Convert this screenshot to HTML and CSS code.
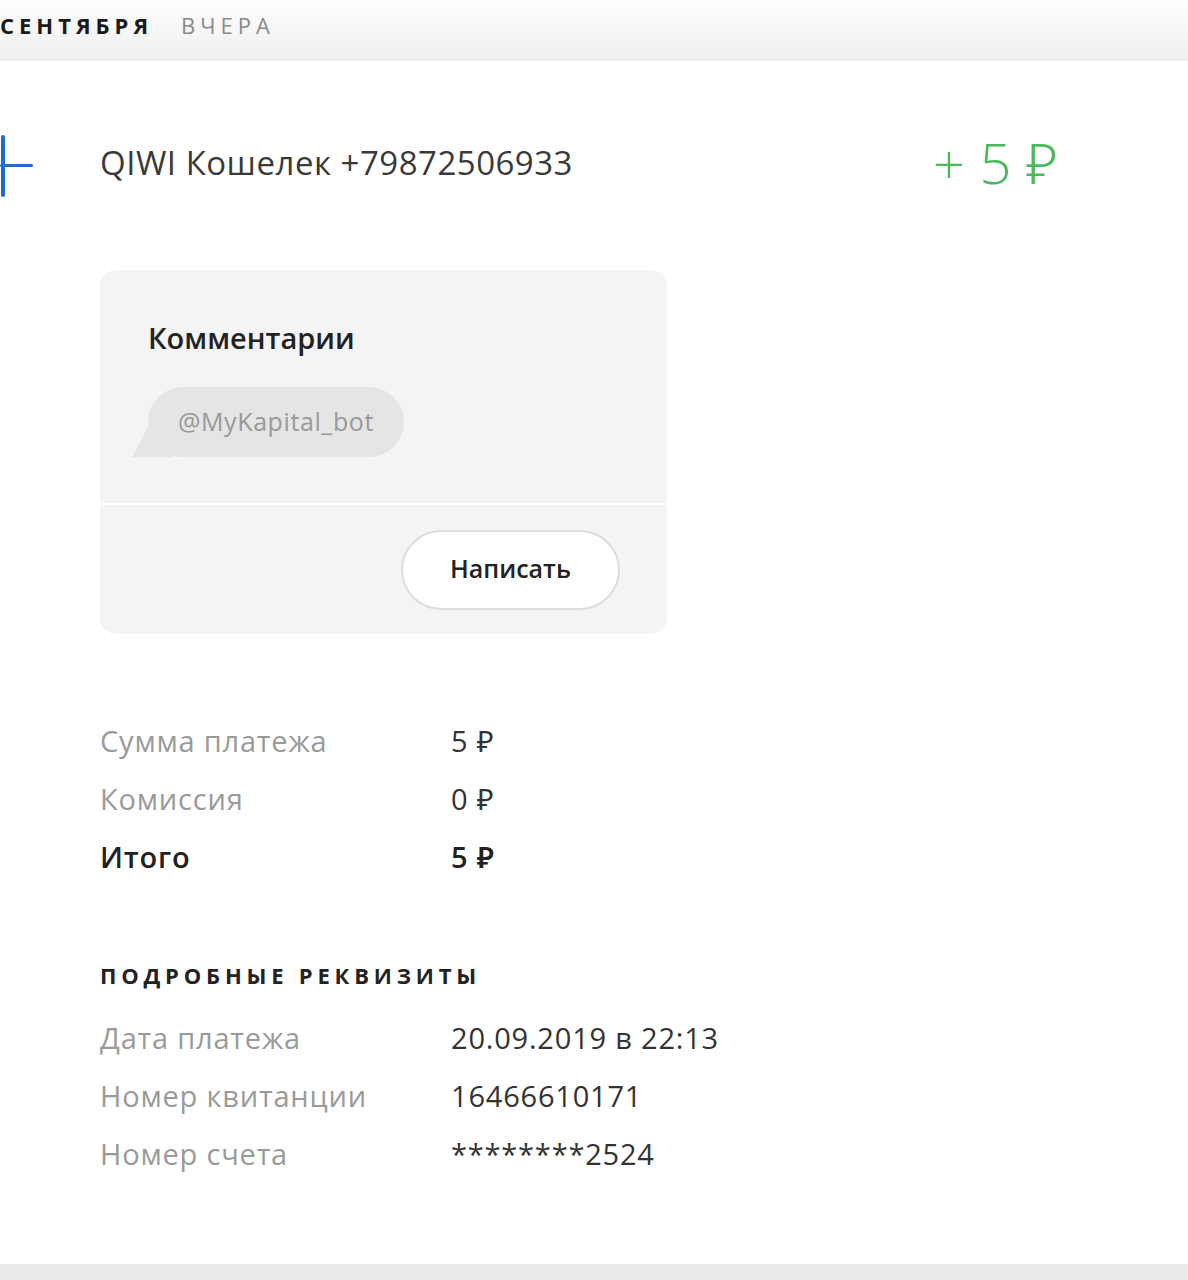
FILE: index.html
```html
<!DOCTYPE html>
<html lang="ru">
<head>
    <meta charset="UTF-8">
    <title>Платеж</title>
    <link rel="stylesheet" href="styles.css">
</head>
<body>
    <div class="day-bar">
        <span class="day-date">СЕНТЯБРЯ</span>
        <span class="day-label">ВЧЕРА</span>
    </div>

    <div class="payment">
        <div class="payment-head">
            <svg class="payment-icon" width="34" height="62" viewBox="0 0 34 62">
                <rect x="1" y="0" width="4" height="62" rx="2" fill="#1d6bd3"/>
                <rect x="0" y="29" width="33" height="3" rx="1.5" fill="#1d6bd3"/>
            </svg>
            <div class="payment-title">QIWI Кошелек +79872506933</div>
            <div class="payment-sum">+ 5 ₽</div>
        </div>

        <div class="comments">
            <div class="comments-body">
                <div class="comments-title">Комментарии</div>
                <div class="bubble">@MyKapital_bot</div>
            </div>
            <div class="comments-foot">
                <button class="write-btn">Написать</button>
            </div>
        </div>

        <div class="rows summary">
            <div class="row"><span class="row-label">Сумма платежа</span><span class="row-value">5 ₽</span></div>
            <div class="row"><span class="row-label">Комиссия</span><span class="row-value">0 ₽</span></div>
            <div class="row total"><span class="row-label">Итого</span><span class="row-value">5 ₽</span></div>
        </div>

        <h2 class="section-title">ПОДРОБНЫЕ РЕКВИЗИТЫ</h2>
        <div class="rows">
            <div class="row"><span class="row-label">Дата платежа</span><span class="row-value">20.09.2019 в 22:13</span></div>
            <div class="row"><span class="row-label">Номер квитанции</span><span class="row-value">16466610171</span></div>
            <div class="row"><span class="row-label">Номер счета</span><span class="row-value">********2524</span></div>
        </div>
    </div>

    <div class="page-foot"></div>
</body>
</html>
```

FILE: styles.css
```css
body {
    margin: 0;
    font-family: "Open Sans", "Noto Sans", sans-serif;
    color: #333;
    background: #fff;
}
.day-bar {
    height: 61px;
    display: flex;
    align-items: center;
    gap: 28px;
    padding-bottom: 12px;
    box-sizing: border-box;
    background: linear-gradient(#fefefe, #eeeeee);
    font-size: 22px;
    letter-spacing: 5px;
}
.day-date {
    font-weight: 700;
    color: #1a1a1a;
}
.day-label {
    color: #8a8a8a;
}
.payment {
    height: 1203px;
}
.payment-head {
    display: flex;
    align-items: center;
    padding: 70px 130px 0 0;
    height: 62px;
}
.payment-icon {
    flex: none;
    margin: 8px 66px 0 0;
}
.payment-title {
    flex: 1;
    font-size: 33px;
    letter-spacing: 0.5px;
    color: #3a3a3a;
}
.payment-sum {
    font-size: 56px;
    font-weight: 300;
    color: #4bb85c;
}
.comments {
    margin: 77px 0 0 100px;
    width: 567px;
    background: #f4f4f4;
    border-radius: 16px;
    overflow: hidden;
}
.comments-body {
    padding: 48px 48px 46px;
    border-bottom: 2px solid #fff;
}
.comments-title {
    font-size: 29px;
    font-weight: 600;
    color: #222;
}
.bubble {
    position: relative;
    display: inline-block;
    margin-top: 30px;
    padding: 0 30px;
    height: 70px;
    line-height: 68px;
    border-radius: 35px;
    background: #e5e5e5;
    font-size: 25px;
    letter-spacing: 0.6px;
    color: #999;
}
.bubble::before {
    content: "";
    position: absolute;
    left: -16px;
    bottom: 0;
    width: 40px;
    height: 30px;
    background: #e5e5e5;
    clip-path: polygon(0 100%, 40% 0, 100% 0, 100% 100%);
}
.comments-foot {
    display: flex;
    justify-content: flex-end;
    padding: 25px 47px 24px;
}
.write-btn {
    width: 219px;
    height: 80px;
    padding-bottom: 6px;
    border-radius: 40px;
    border: 2px solid #dcdcdc;
    background: #fff;
    font-family: inherit;
    font-size: 25px;
    font-weight: 600;
    color: #222;
}
.rows {
    padding-left: 100px;
}
.summary {
    margin-top: 77px;
}
.row {
    display: flex;
    height: 58px;
    align-items: center;
    font-size: 29px;
    letter-spacing: 0.8px;
}
.row-label {
    width: 351px;
    color: #9a9a9a;
}
.row-value {
    color: #333;
}
.total .row-label,
.total .row-value {
    color: #222;
    font-weight: 600;
}
.section-title {
    margin: 75px 0 18px 100px;
    height: 30px;
    line-height: 30px;
    font-size: 22px;
    font-weight: 700;
    letter-spacing: 4.8px;
    color: #222;
}
.page-foot {
    height: 16px;
    background: #ebebeb;
}
```
